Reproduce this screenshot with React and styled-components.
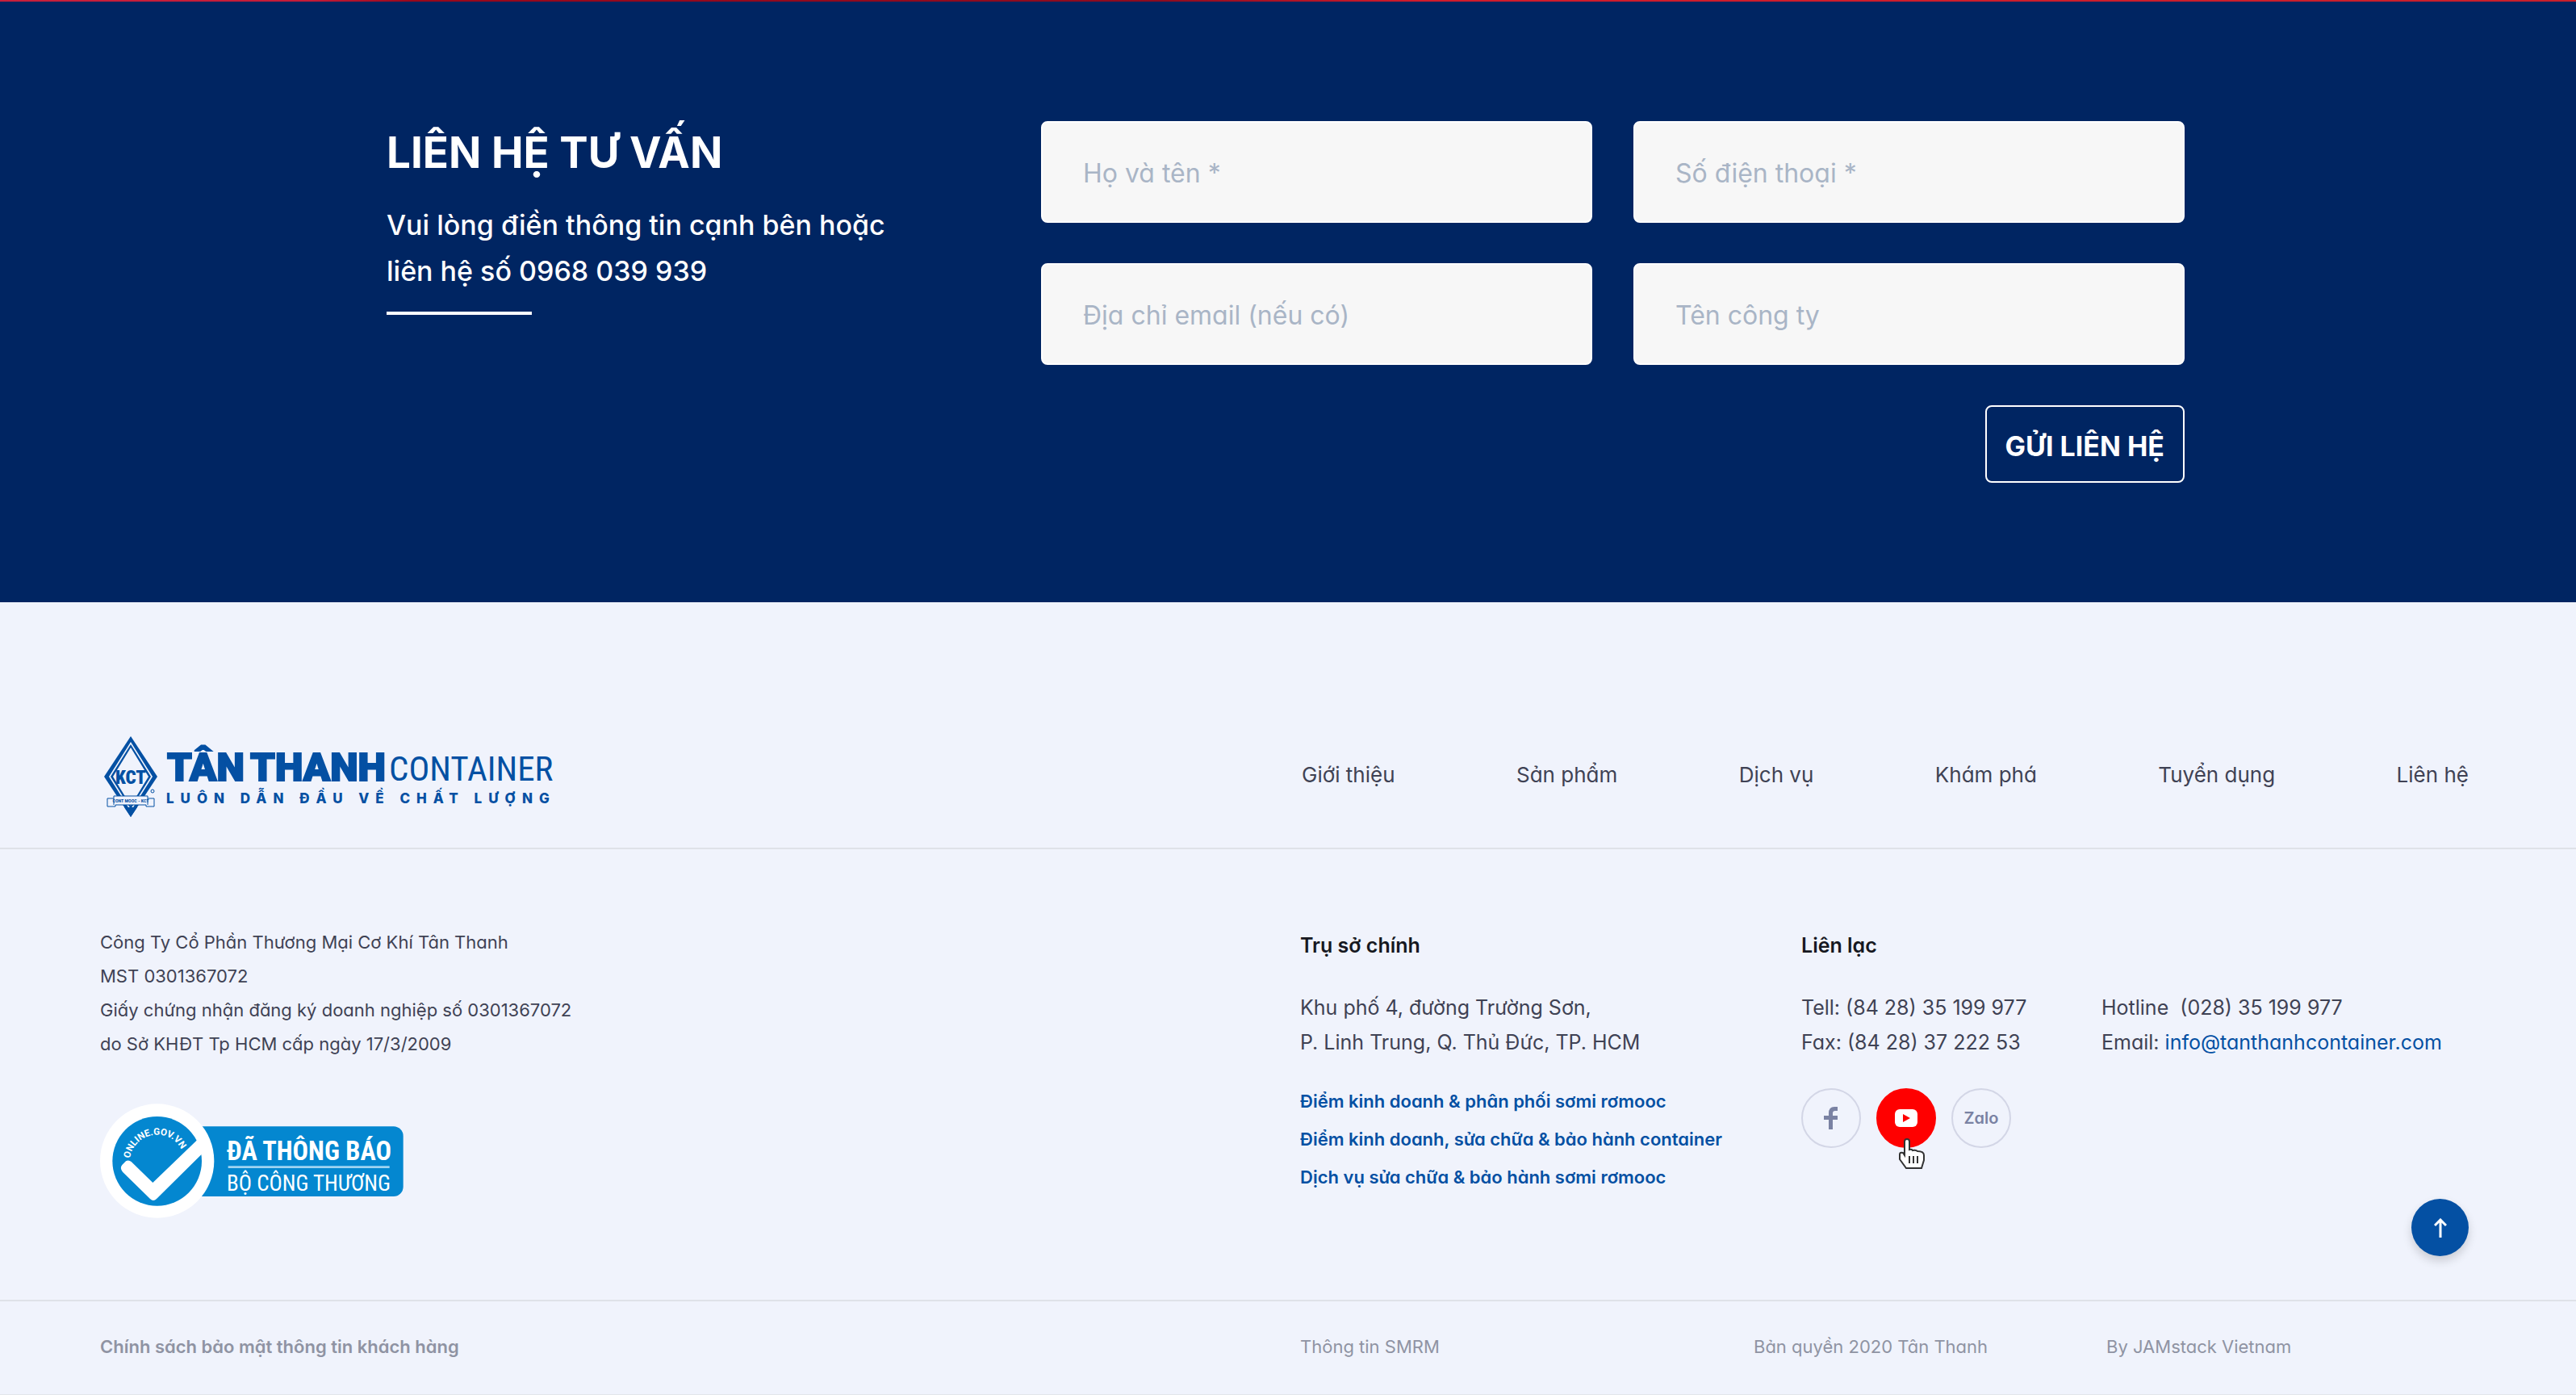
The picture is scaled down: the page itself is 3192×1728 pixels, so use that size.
import { useState } from "react";
import styled, { createGlobalStyle, css } from "styled-components";

const NAV_LINKS = [
  "Giới thiệu",
  "Sản phẩm",
  "Dịch vụ",
  "Khám phá",
  "Tuyển dụng",
  "Liên hệ",
];

const FIELDS = [
  { name: "name", type: "text", label: "Họ và tên *" },
  { name: "phone", type: "tel", label: "Số điện thoại *" },
  { name: "email", type: "email", label: "Địa chỉ email (nếu có)" },
  { name: "company", type: "text", label: "Tên công ty" },
];

const BRANCHES = [
  "Điểm kinh doanh & phân phối sơmi rơmooc",
  "Điểm kinh doanh, sửa chữa & bảo hành container",
  "Dịch vụ sửa chữa & bảo hành sơmi rơmooc",
];

function ContactForm() {
  const [values, setValues] = useState({});

  return (
    <Form onSubmit={e => e.preventDefault()}>
      {FIELDS.map(({ name, type, label }) => (
        <Field
          key={name}
          name={name}
          type={type}
          placeholder={label}
          aria-label={label}
          value={values[name] || ""}
          onChange={e => setValues({ ...values, [name]: e.target.value })}
        />
      ))}
      <Submit type="submit">GỬI LIÊN HỆ</Submit>
    </Form>
  );
}

function Logo() {
  return (
    <svg width="576" height="104" viewBox="0 0 576 104" fill="#0450a3">
      <path d="M38 2 71 52 38 102 5 52Z" />
      <path d="M38 9 65 52 38 95 11 52Z" fill="#f0f3fc" />
      <path d="M38 12 63 52 38 92 13 52Z" />
      <path d="M38 16 60 52 38 88 16 52Z" fill="#f0f3fc" />
      <text x="38" y="61" textAnchor="middle" fontFamily="'Roboto Condensed', Roboto, sans-serif" fontWeight="900" fontSize="23">KCT</text>
      <path d="M30 90h16l-8 12Z" />
      <path d="M17 76h42v3h8v10h-10v-2H19v2H9v-10h8Z" fill="#f0f3fc" stroke="#0450a3" />
      <path d="M17 79v8M59 79v8" stroke="#0450a3" />
      <text x="38" y="84" textAnchor="middle" fontFamily="'Roboto Condensed', Roboto, sans-serif" fontWeight="700" fontSize="6">CONT MOOC - KCT</text>
      <circle cx="65" cy="70" r="2" fill="none" stroke="#0450a3" />
      <g fontFamily="Roboto, sans-serif" fontWeight="900" fontSize="49" stroke="#0450a3" strokeWidth="2">
        <text x="83" y="57">TÂN</text>
        <text x="186" y="57">THANH</text>
      </g>
      <text x="358" y="57" fontFamily="'Roboto Condensed', Roboto, sans-serif" fontSize="43">CONTAINER</text>
      <text x="82" y="85" fontFamily="Inter, sans-serif" fontWeight="800" fontSize="17" letterSpacing="8">LUÔN DẪN ĐẦU VỀ CHẤT LƯỢNG</text>
    </svg>
  );
}

function NoticeBadge() {
  return (
    <svg width="376" height="142" viewBox="72 50 1128 426">
      <path d="M400 135h763a36 36 0 0 1 36 36v188a36 36 0 0 1-36 36H400Z" fill="#0487d0" />
      <circle cx="284" cy="263" r="212" fill="#fff" />
      <circle cx="284" cy="264" r="166" fill="#0487d0" />
      <path d="M154 278 168 264Q178 258 188 266L268 344 434 184 458 230 282 404Q270 416 258 404L156 304Q144 290 154 278Z" fill="#fff" />
      <path id="badge-arc" d="M183 254A102 102 0 0 1 386 264" fill="none" />
      <text fill="#fff" fontFamily="Roboto, sans-serif" fontWeight="700" fontSize="35">
        <textPath href="#badge-arc">ONLINE.GOV.VN</textPath>
      </text>
      <text x="543" y="260" fill="#fff" fontFamily="'Roboto Condensed', Roboto, sans-serif" fontWeight="700" fontSize="97">ĐÃ THÔNG BÁO</text>
      <path d="M548 286h600" stroke="#9fd4f2" strokeWidth="8" />
      <text x="543" y="373" fill="#fff" fontFamily="'Roboto Condensed', Roboto, sans-serif" fontSize="81">BỘ CÔNG THƯƠNG</text>
    </svg>
  );
}

function Cursor() {
  return (
    <CursorIcon width="34" height="40" viewBox="0 0 34 40">
      <path
        d="M11 2Q14 2 14 5V15Q17 14 18 16Q22 15 24 17Q32 17 32 22V28L29 38H10L2 27V21Q2 18 6 19L8 22V5Q8 2 11 2Z"
        fill="#fff"
        stroke="#333"
        strokeWidth="2"
      />
      <path d="M14 23v9M19 23v9M24 23v9" stroke="#333" strokeWidth="2" />
    </CursorIcon>
  );
}

export default function App() {
  return (
    <>
      <GlobalStyle />
      <Strip />
      <Contact>
        <ContactInner>
          <Intro>
            <Title>LIÊN HỆ TƯ VẤN</Title>
            <Lead>
              Vui lòng điền thông tin cạnh bên hoặc
              <br />
              liên hệ số 0968 039 939
            </Lead>
          </Intro>
          <ContactForm />
        </ContactInner>
      </Contact>

      <Footer>
        <TopRow>
          <HomeLink href="#" aria-label="Tân Thanh Container">
            <Logo />
          </HomeLink>
          <Nav>
            {NAV_LINKS.map(label => (
              <a key={label} href="#">
                {label}
              </a>
            ))}
          </Nav>
        </TopRow>

        <MainRow>
          <Company>
            <p>
              Công Ty Cổ Phần Thương Mại Cơ Khí Tân Thanh
              <br />
              MST 0301367072
              <br />
              Giấy chứng nhận đăng ký doanh nghiệp số 0301367072
              <br />
              do Sở KHĐT Tp HCM cấp ngày 17/3/2009
            </p>
            <BadgeLink href="#" aria-label="Đã thông báo Bộ Công Thương">
              <NoticeBadge />
            </BadgeLink>
          </Company>

          <div>
            <Heading>Trụ sở chính</Heading>
            <Text>
              Khu phố 4, đường Trường Sơn,
              <br />
              P. Linh Trung, Q. Thủ Đức, TP. HCM
            </Text>
            <Branches>
              {BRANCHES.map(label => (
                <li key={label}>
                  <a href="#">{label}</a>
                </li>
              ))}
            </Branches>
          </div>

          <div>
            <Heading>Liên lạc</Heading>
            <Phones>
              <Text>
                Tell: (84 28) 35 199 977
                <br />
                Fax: (84 28) 37 222 53
              </Text>
              <Text>
                Hotline&nbsp; (028) 35 199 977
                <br />
                Email: <a href="#">info@tanthanhcontainer.com</a>
              </Text>
            </Phones>
            <Socials>
              <Social href="#" aria-label="Facebook">
                <svg width="18" height="28" viewBox="0 0 18 28" fill="currentColor">
                  <path d="M6 28V16H0v-5h6V8Q6 0 13 0h4v5h-3q-3 0-3 3v3h6v5h-6v12Z" />
                </svg>
              </Social>
              <Social href="#" aria-label="YouTube" $active>
                <svg width="28" height="22" viewBox="0 0 28 22">
                  <rect width="28" height="22" rx="6" fill="#fff" />
                  <path d="M10 6v10l9-5Z" fill="#f00" />
                </svg>
                <Cursor />
              </Social>
              <Social href="#">Zalo</Social>
            </Socials>
          </div>
        </MainRow>

        <BottomRow>
          <Policy href="#">Chính sách bảo mật thông tin khách hàng</Policy>
          <a href="#">Thông tin SMRM</a>
          <span>Bản quyền 2020 Tân Thanh</span>
          <span>By JAMstack Vietnam</span>
        </BottomRow>
      </Footer>

      <ScrollTop type="button" aria-label="Lên đầu trang">
        <svg width="16" height="24" viewBox="0 0 16 24" fill="none" stroke="#fff" strokeWidth="3">
          <path d="M8 24V2M1 9l7-7 7 7" />
        </svg>
      </ScrollTop>
    </>
  );
}

const GlobalStyle = createGlobalStyle`
  * {
    box-sizing: border-box;
  }

  body {
    margin: 0;
    background: #f0f3fc;
    color: #3f4254;
    font-family: Inter, "Noto Sans", sans-serif;
    font-feature-settings: "cv11";
  }

  h2, h3, p, ul {
    margin: 0;
    padding: 0;
  }

  a {
    color: inherit;
    text-decoration: none;
  }

  svg {
    display: block;
  }
`;

const Strip = styled.div`
  height: 2px;
  background: linear-gradient(
    90deg,
    #c8203c,
    #c41c38 12%,
    #98081c 16%,
    #8c0c20 45%,
    #d01c2c 55%,
    #c8202c
  );
`;

const Contact = styled.section`
  background: #002562;
  color: #fff;
  padding: 148px 485px 148px 479px;
`;

const ContactInner = styled.div`
  display: grid;
  grid-template-columns: 811fr 1417fr;
`;

const Intro = styled.div`
  &::after {
    content: "";
    display: block;
    width: 180px;
    height: 4px;
    margin-top: 22px;
    background: #fff;
  }
`;

const Title = styled.h2`
  font-size: 53px;
  line-height: 78px;
  font-weight: 700;
`;

const Lead = styled.p`
  margin-top: 22px;
  font-size: 34px;
  line-height: 57px;
  font-weight: 500;
`;

const Form = styled.form`
  display: grid;
  grid-template-columns: 1fr 1fr;
  gap: 50px 51px;
`;

const Field = styled.input`
  width: 100%;
  height: 126px;
  padding: 2px 50px 0;
  border: 2px solid #fff;
  border-radius: 8px;
  background: #f7f7f7;
  font-family: inherit;
  font-feature-settings: inherit;
  font-size: 32px;
  color: #3f4254;

  &::placeholder {
    color: #a9b5c6;
    opacity: 1;
  }
`;

const Submit = styled.button`
  grid-column: 2;
  justify-self: end;
  height: 96px;
  padding: 4px 23px 0;
  border: 2px solid #fff;
  border-radius: 8px;
  background: transparent;
  color: #fff;
  font-family: inherit;
  font-size: 34px;
  font-weight: 700;
`;

const Footer = styled.footer`
  padding-top: 164px;
  border-bottom: 1px solid #e2e6ea;
`;

const rowPadding = css`
  padding-left: 124px;
  padding-right: 133px;
`;

const TopRow = styled.div`
  ${rowPadding}
  display: grid;
  grid-template-columns: 1489fr 1446fr;
  align-items: center;
  height: 142px;
  padding-bottom: 38px;
  border-bottom: 2px solid #dfe2e8;
`;

const HomeLink = styled.a`
  justify-self: start;
`;

const Nav = styled.nav`
  display: flex;
  justify-content: space-between;
  padding-bottom: 4px;
  font-size: 26px;
  line-height: 42px;
`;

const MainRow = styled.div`
  ${rowPadding}
  display: grid;
  grid-template-columns: 1487fr 621fr 827fr;
  padding-top: 94px;
  padding-bottom: 101px;
`;

const Company = styled.div`
  font-size: 22px;
  line-height: 42px;
`;

const BadgeLink = styled.a`
  display: block;
  width: fit-content;
  margin-top: 53px;
`;

const Heading = styled.h3`
  color: #16181f;
  font-size: 25px;
  line-height: 50px;
  font-weight: 600;
`;

const Text = styled.p`
  margin-top: 31px;
  font-size: 25px;
  line-height: 43px;

  a {
    color: #0450a3;
  }
`;

const Branches = styled.ul`
  margin-top: 28px;
  list-style: none;
  color: #0450a3;
  font-size: 22px;
  line-height: 47px;
  font-weight: 600;
  white-space: nowrap;
`;

const Phones = styled.div`
  display: grid;
  grid-template-columns: 372fr 455fr;
  white-space: nowrap;
`;

const Socials = styled.div`
  display: flex;
  gap: 19px;
  margin-top: 35px;
`;

const Social = styled.a`
  position: relative;
  display: flex;
  align-items: center;
  justify-content: center;
  width: 74px;
  height: 74px;
  border: 2px solid ${props => (props.$active ? "#f00" : "#d3d6e6")};
  border-radius: 50%;
  background: ${props => (props.$active ? "#f00" : "transparent")};
  color: #7a82a3;
  font-size: 20px;
  font-weight: 600;
`;

const CursorIcon = styled.svg`
  position: absolute;
  top: 59px;
  left: 25px;
`;

const BottomRow = styled.div`
  ${rowPadding}
  display: grid;
  grid-template-columns: 1487fr 562fr 437fr 449fr;
  align-items: center;
  height: 117px;
  padding-bottom: 4px;
  border-top: 2px solid #dfe2e8;
  color: #8f93a3;
  font-size: 22px;
`;

const Policy = styled.a`
  font-weight: 600;
`;

const ScrollTop = styled.button`
  position: fixed;
  right: 133px;
  bottom: 172px;
  display: flex;
  align-items: center;
  justify-content: center;
  width: 71px;
  height: 71px;
  padding: 0;
  border: 0;
  border-radius: 50%;
  background: #0450a3;
  box-shadow: 0 6px 12px rgba(0, 0, 0, 0.16);
`;
